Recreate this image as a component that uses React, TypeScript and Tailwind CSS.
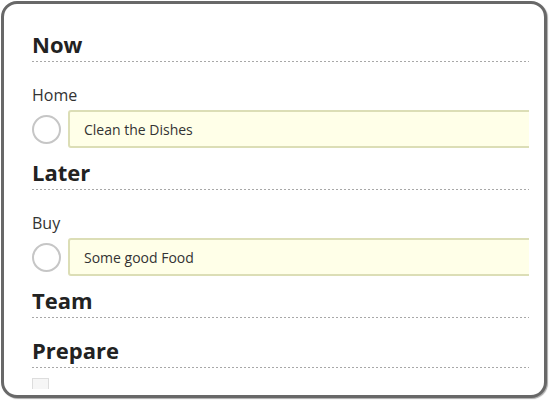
import React from 'react';

const font = { fontFamily: '"Open Sans", "Noto Sans", sans-serif' };

const Heading = ({ title, className = '' }: { title: string; className?: string }) => (
    <div className={className}>
        <h2 className="text-[22px] leading-[30px] font-bold text-[#222] pb-[2px]">{title}</h2>
        <div className="h-px w-full bg-[linear-gradient(to_right,#a8a8a8_50%,transparent_50%)] bg-[length:4px_1px] bg-repeat-x" />
    </div>
);

const Task = ({ group, text }: { group: string; text: string }) => (
    <div className="mt-[22px]">
        <div className="text-[16px] leading-[22px] text-[#333]">{group}</div>
        <div className="flex items-center mt-[4px] h-[38px]">
            <div className="w-[29px] h-[29px] rounded-full border-2 border-[#c6c6c6] bg-white shrink-0" />
            <div className="ml-[7px] w-[490px] shrink-0 h-[38px] flex items-center bg-[#ffffe8] border-2 border-[#dcdeb6] rounded-[3px] pl-[14px] text-[14px] text-[#333]">
                {text}
            </div>
        </div>
    </div>
);

export default function App() {
    return (
        <div className="w-[550px] h-[401px] bg-white" style={font}>
            <div className="ml-[1px] mt-[1px] w-[546px] h-[397px] border-[3px] border-[#686868] rounded-[16px] shadow-[1px_1px_1px_#aaa] pl-[28px] pr-[15px] pb-[6px] bg-white">
                <div className="h-[385px] overflow-hidden pt-[25px]">
                    <Heading title="Now" />
                    <Task group="Home" text="Clean the Dishes" />
                    <Heading title="Later" className="mt-[9px]" />
                    <Task group="Buy" text="Some good Food" />
                    <Heading title="Team" className="mt-[9px]" />
                    <Heading title="Prepare" className="mt-[17px]" />
                    <div className="mt-[10px] w-[17px] h-[14px] border border-[#ddd] bg-[#f6f6f6]" />
                </div>
            </div>
        </div>
    );
}
